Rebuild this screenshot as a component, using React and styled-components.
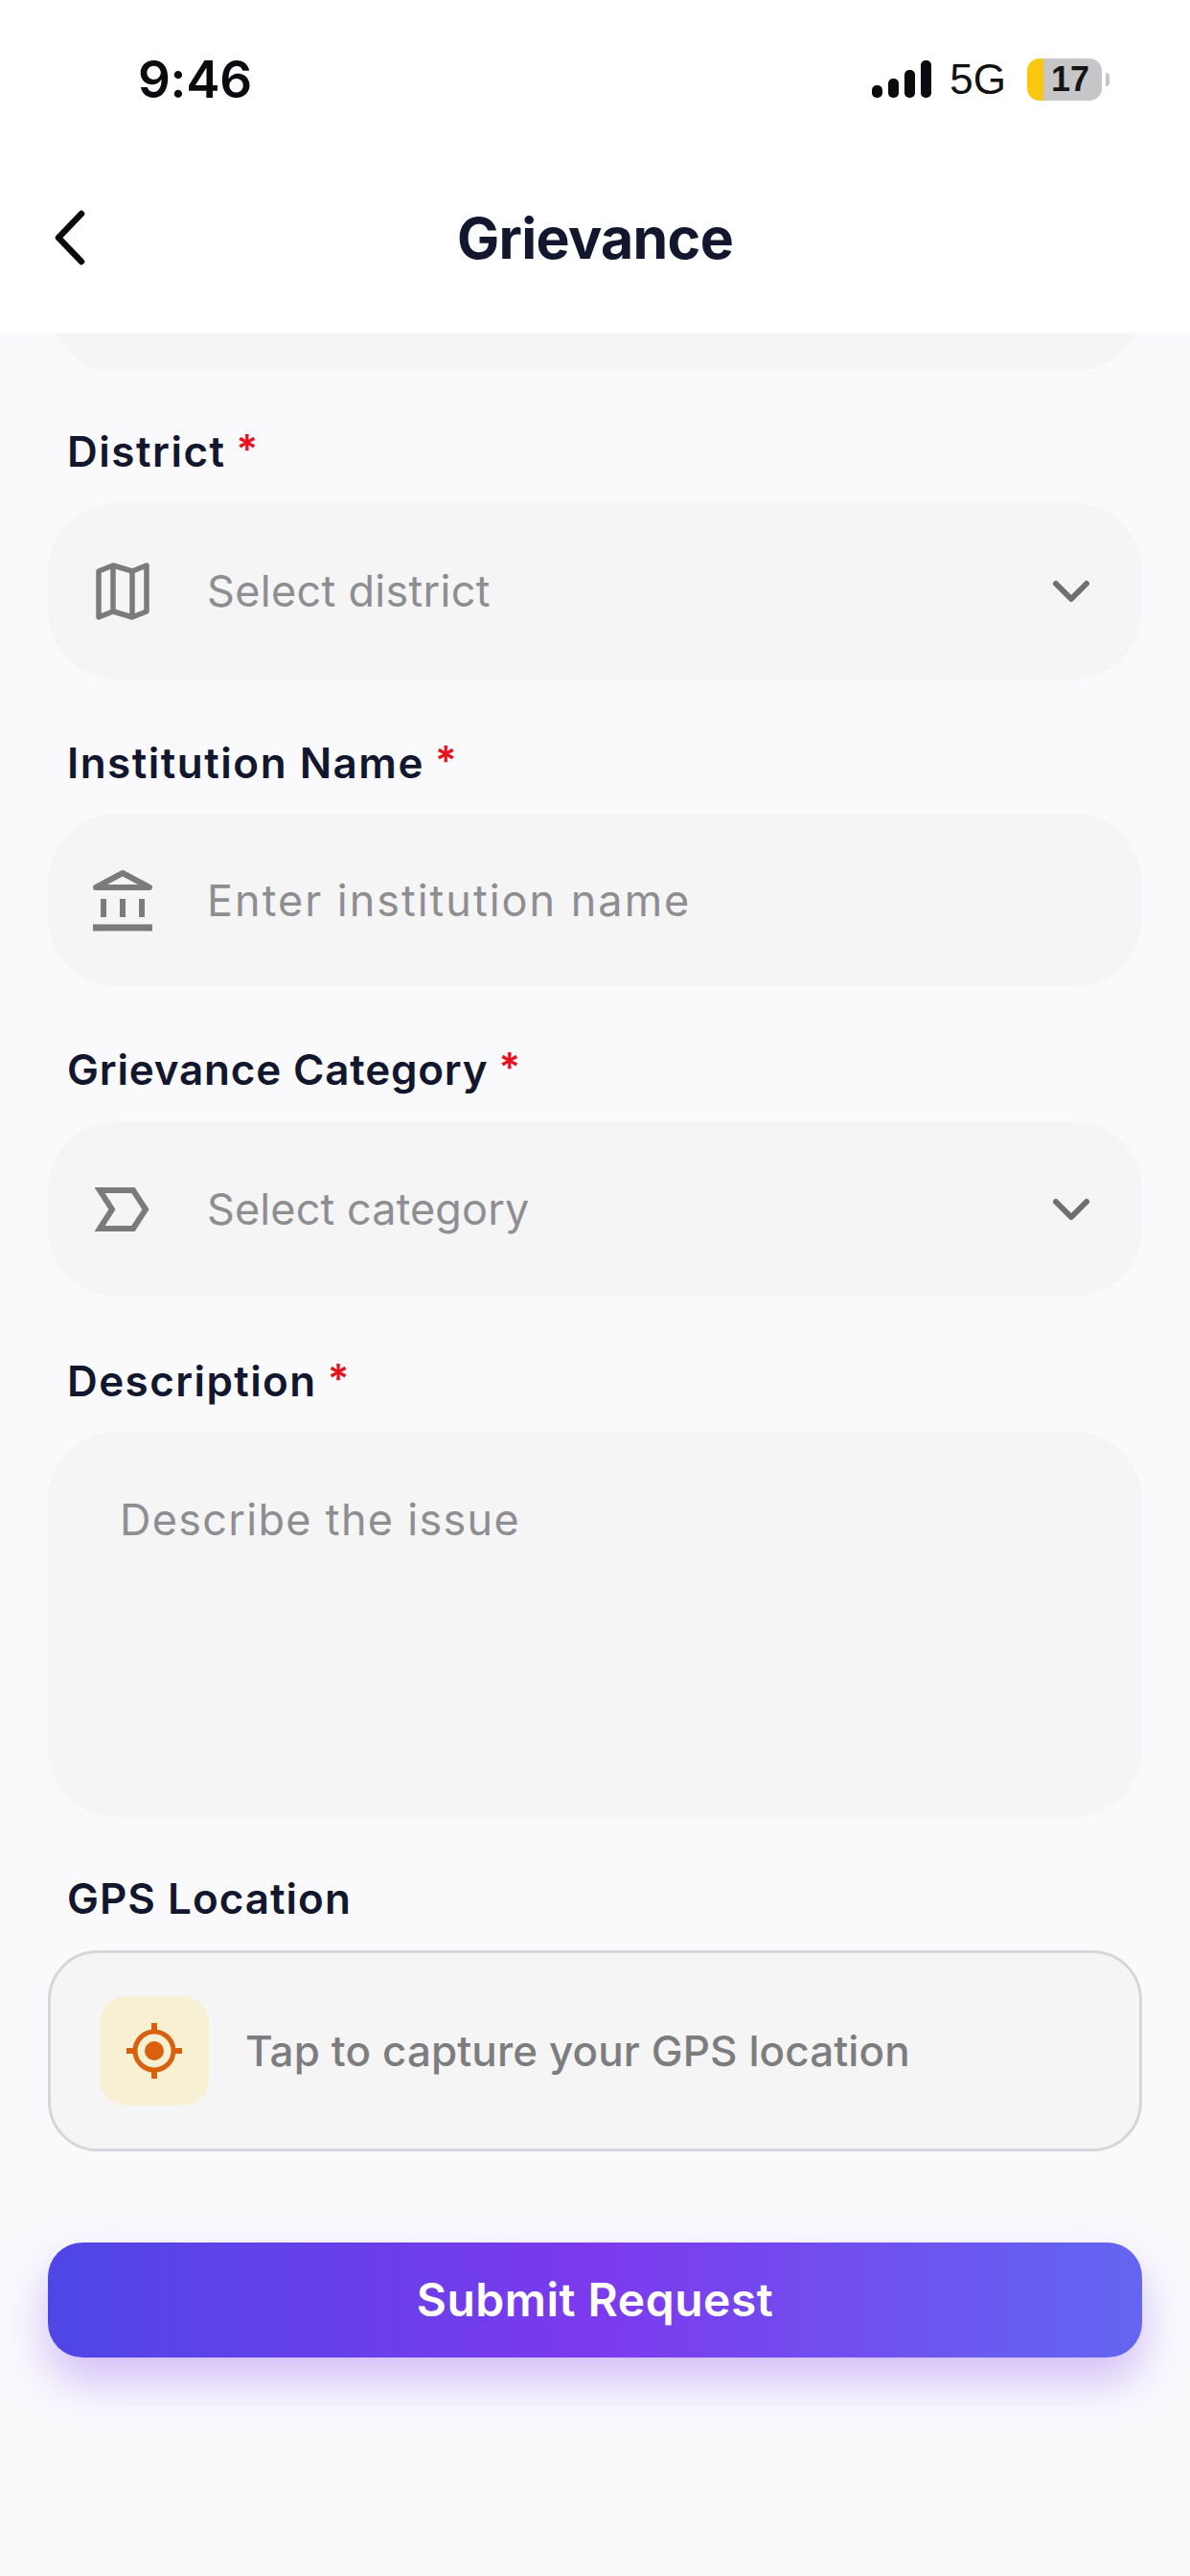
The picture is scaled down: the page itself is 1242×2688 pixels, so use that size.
import React from 'react';
import styled, { createGlobalStyle } from 'styled-components';

const Global = createGlobalStyle`
  html, body { margin: 0; padding: 0; background: #fafafd; }
  * { box-sizing: border-box; }
`;
const FONT = `Inter, "Noto Sans", "Liberation Sans", sans-serif`;

const Page = styled.div`
  width: 1242px; height: 2688px; display: flex; flex-direction: column;
  background: #fafafd; font-family: ${FONT}; overflow: hidden;
`;
const Top = styled.header`
  height: 347px; flex: none; background: #fff; display: flex; flex-direction: column;
  position: relative; z-index: 1;
`;
const StatusBar = styled.div`
  height: 166px; flex: none; display: flex; align-items: flex-start; justify-content: space-between;
  padding: 54px 84px 0 144px;
`;
const Time = styled.div`
  font: 600 53px/58px ${FONT}; color: #0b0b0f; letter-spacing: -0.3px;
`;
const StatusRight = styled.div`
  display: flex; align-items: center; height: 58px;
`;
const FiveG = styled.span`
  font: 400 44px/58px "Liberation Sans", Arial, sans-serif; color: #111; margin: 0 22px 0 19px;
`;
const Battery = styled.div`
  width: 78px; height: 44px; border-radius: 13px; background: linear-gradient(90deg, #f9c80e 0 17px, #c6c6c8 17px);
  display: flex; align-items: center; justify-content: center; padding-left: 12px;
  font: 700 36px/44px "Liberation Sans", Arial, sans-serif; color: #151515;
`;
const BatteryCap = styled.div`
  width: 4px; height: 14px; margin-left: 4px; border-radius: 0 4px 4px 0; background: #c6c6c8;
`;
const NavBar = styled.div`
  flex: 1; display: flex; align-items: flex-start; justify-content: center; position: relative; padding-top: 41px;
`;
const BackBtn = styled.button`
  position: absolute; left: 51px; top: 52px; width: 46px; height: 60px; padding: 0;
  border: 0; background: none; display: flex;
`;
const Title = styled.h1`
  margin: 0; font: 700 59px/84px ${FONT}; color: #12172e; letter-spacing: -0.7px;
`;
const Body = styled.main`
  flex: 1; padding: 0 50px; display: flex; flex-direction: column; overflow: hidden;
`;
const FieldGroup = styled.section`
  display: flex; flex-direction: column;
`;
const Stub = styled.div`
  height: 182px; margin-top: -142px; border-radius: 70px; background: #f5f5f6; flex: none;
`;
const Label = styled.label`
  height: 56px; display: flex; align-items: center; gap: 11px; padding-left: 20px;
  font: 600 44px/56px ${FONT}; color: #12172e; letter-spacing: ${p => p.$ls}px;
`;
const Star = styled.span`
  color: #e8121f; font-size: 42px; letter-spacing: 0; transform: translateY(-2px);
`;
const Field = styled.div`
  height: ${p => p.$h}px; margin-top: ${p => p.$mt}px; border-radius: 72px; background: #f5f5f6;
  display: flex; align-items: center; padding: 0 55px 0 43px;
`;
const IconSlot = styled.span`
  width: 70px; height: 70px; flex: none; display: flex; align-items: center; justify-content: center;
  color: #7b7b7b;
`;
const Placeholder = styled.span`
  margin-left: 53px; flex: 1; font: 400 45px/60px ${FONT}; color: #8e8e92; letter-spacing: ${p => p.$ls}px;
`;
const Area = styled.div`
  height: 402px; margin-top: 25px; border-radius: 72px; background: #f5f5f6; padding: 62px 75px;
  font: 400 45px/60px ${FONT}; color: #8e8e92; letter-spacing: 1.3px;
`;
const GpsCard = styled.div`
  height: 210px; margin-top: 26px; border-radius: 52px; background: #f5f5f6; border: 3px solid #d6d6da;
  display: flex; align-items: center; padding: 0 51px; gap: 38px;
`;
const GpsTile = styled.span`
  width: 114px; height: 114px; border-radius: 28px; background: #f8f0d2; flex: none;
  display: flex; align-items: center; justify-content: center;
`;
const GpsText = styled.span`
  font: 500 44px/60px ${FONT}; color: #7d7d80; letter-spacing: 0.1px;
`;
const Submit = styled.button`
  height: 120px; margin-top: 95px; border: 0; border-radius: 36px; color: #fff; flex: none;
  background: linear-gradient(90deg, #4f46e5 0%, #7c3aed 50%, #6366f1 100%);
  box-shadow: 0 24px 48px rgba(124, 58, 237, 0.32);
  font: 600 48px/60px ${FONT}; letter-spacing: 0.5px;
`;
const Gap = styled.div`
  height: ${p => p.$h}px; flex: none;
`;

const Chevron = () => (
  <svg width="38" height="24" viewBox="0 0 38 24" fill="none" stroke="#6f6f72" strokeWidth="6" strokeLinecap="round" strokeLinejoin="round">
    <path d="M3 4l16 16L35 4" />
  </svg>
);
const MapIcon = () => (
  <svg width="56" height="60" viewBox="0 0 56 60" fill="none" stroke="currentColor" strokeWidth="5.5" strokeLinejoin="round">
    <path d="M3 9l15-6 20 6 15-6v48l-15 6-20-6-15 6z" />
    <path d="M18 3v48M38 9v48" />
  </svg>
);
const BankIcon = () => (
  <svg width="64" height="66" viewBox="0 0 64 66" fill="none" stroke="currentColor" strokeWidth="6">
    <path d="M4 19L32 4l28 15z" strokeLinejoin="round" />
    <path d="M12 31v19M32 31v19M52 31v19" />
    <path d="M1 61h62" strokeWidth="7" />
  </svg>
);
const TagIcon = () => (
  <svg width="58" height="46" viewBox="0 0 58 46" fill="none" stroke="currentColor" strokeWidth="6">
    <path d="M5 3h35l13 20-13 20H5l13-20z" />
  </svg>
);
const GpsIcon = () => (
  <svg width="62" height="62" viewBox="0 0 62 62" fill="none" stroke="#d9600f">
    <circle cx="31" cy="31" r="20" strokeWidth="5" />
    <circle cx="31" cy="31" r="10" fill="#d9600f" stroke="none" />
    <path d="M31 2v8M31 52v8M2 31h8M52 31h8" strokeWidth="6" />
  </svg>
);
const Signal = () => (
  <svg width="62" height="40" viewBox="0 0 62 40" fill="#0b0b0f">
    <rect x="0" y="26" width="11" height="13" rx="5" />
    <rect x="17" y="19" width="11" height="20" rx="5" />
    <rect x="34" y="10" width="11" height="29" rx="5" />
    <rect x="51" y="0" width="11" height="39" rx="5" />
  </svg>
);

const fields = [
  { label: 'District', ls: 1.5, icon: <MapIcon />, text: 'Select district', tls: 0.3, before: 56, mt: 26, h: 184, select: true },
  { label: 'Institution Name', ls: 1.5, icon: <BankIcon />, text: 'Enter institution name', tls: 2, before: 59, mt: 25, h: 181 },
  { label: 'Grievance Category', ls: 0.8, icon: <TagIcon />, text: 'Select category', tls: 0.1, before: 58, mt: 26, h: 183, select: true },
];

export default function App() {
  return (
    <Page>
      <Global />
      <Top>
        <StatusBar>
          <Time>9:46</Time>
          <StatusRight>
            <Signal />
            <FiveG>5G</FiveG>
            <Battery>17</Battery>
            <BatteryCap />
          </StatusRight>
        </StatusBar>
        <NavBar>
          <BackBtn aria-label="Back">
            <svg width="46" height="60" viewBox="0 0 46 60" fill="none" stroke="#0b0b0f" strokeWidth="6.5" strokeLinecap="round" strokeLinejoin="round">
              <path d="M34 5L10 30l24 25" />
            </svg>
          </BackBtn>
          <Title>Grievance</Title>
        </NavBar>
      </Top>
      <Body>
        <Stub />
        {fields.map(f => (
          <FieldGroup key={f.label}>
            <Gap $h={f.before} />
            <Label $ls={f.ls}>{f.label}<Star>*</Star></Label>
            <Field $h={f.h} $mt={f.mt}>
              <IconSlot>{f.icon}</IconSlot>
              <Placeholder $ls={f.tls}>{f.text}</Placeholder>
              {f.select && <Chevron />}
            </Field>
          </FieldGroup>
        ))}
        <Gap $h={60} />
        <FieldGroup>
          <Label $ls={1.4}>Description<Star>*</Star></Label>
          <Area>Describe the issue</Area>
        </FieldGroup>
        <Gap $h={57} />
        <FieldGroup>
          <Label $ls={1}>GPS Location</Label>
          <GpsCard>
            <GpsTile><GpsIcon /></GpsTile>
            <GpsText>Tap to capture your GPS location</GpsText>
          </GpsCard>
        </FieldGroup>
        <Submit>Submit Request</Submit>
      </Body>
    </Page>
  );
}
